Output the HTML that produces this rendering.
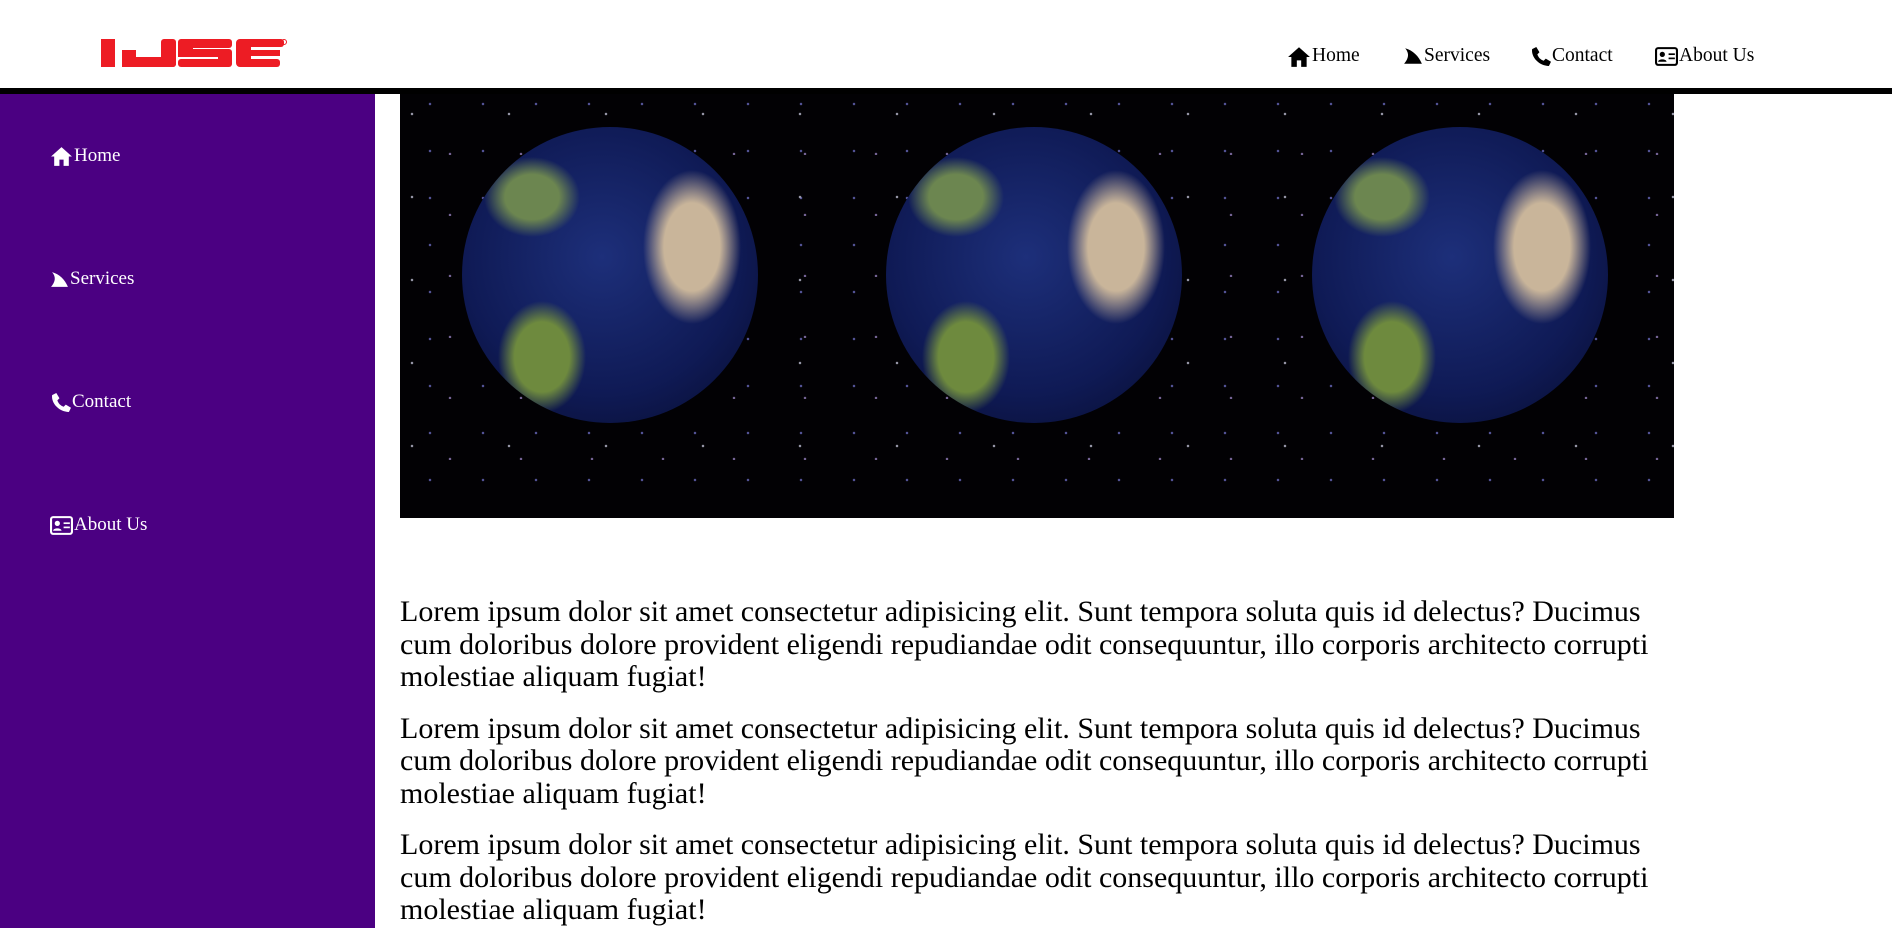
<!DOCTYPE html>
<html><head><meta charset="utf-8"><style>
*{margin:0;padding:0;box-sizing:border-box}
body{width:1892px;height:928px;overflow:hidden;background:#fff;font-family:"Liberation Serif",serif;position:relative}
#hdr{position:absolute;left:0;top:0;width:1892px;height:88px;background:#fff}
#bar{position:absolute;left:0;top:88px;width:1892px;height:6px;background:#000}
.nav{position:absolute;top:44px;font-size:19.5px;color:#000;display:flex;align-items:center;white-space:nowrap;line-height:24px}
.nav svg,.side svg{display:block;margin-right:1px}
#side{position:absolute;left:0;top:94px;width:375px;height:834px;background:#4b0082}
.side{position:absolute;left:50px;font-size:19px;color:#fff;display:flex;align-items:center;line-height:24px}
#img{position:absolute;left:400px;top:94px;width:1274px;height:424px;background:
radial-gradient(circle at 12px 20px,#99a 0 1px,transparent 1.5px) 0 0/97px 83px,
radial-gradient(circle at 50px 60px,#769 0 1px,transparent 1.5px) 0 0/71px 61px,
radial-gradient(circle at 30px 10px,#559 0 1px,transparent 1.5px) 0 0/53px 47px,#020104}
.g{position:absolute;top:33px;width:296px;height:296px;border-radius:50%;background:
radial-gradient(ellipse 70px 110px at 230px 120px,#c9b59a 0 40%,transparent 70%),
radial-gradient(ellipse 55px 70px at 80px 230px,#6e8a3e 0 50%,transparent 80%),
radial-gradient(ellipse 60px 50px at 70px 70px,#6c8650 0 45%,transparent 80%),
radial-gradient(circle at 140px 130px,#1d2f7a 0,#0f1a55 60%,#070b2a 100%)}
#txt{position:absolute;left:400px;top:596px;width:1255px;font-size:30px;line-height:32.5px;color:#000}
#txt p{margin-bottom:19px}
</style></head><body>
<div id="hdr">
<svg style="position:absolute;left:0;top:0" width="300" height="88" fill="#ed1c24">
<rect x="101" y="39" width="14" height="28"/>
<rect x="161" y="39" width="15" height="28" rx="3"/><rect x="122" y="57" width="54" height="10" rx="3"/><rect x="122" y="50" width="14" height="17"/>
<rect x="184" y="39" width="48" height="9" rx="3"/><rect x="178" y="39" width="15" height="18" rx="3"/><rect x="178" y="49" width="50" height="8"/><rect x="218" y="49" width="14" height="18" rx="3"/><rect x="178" y="59" width="52" height="8" rx="3"/>
<rect x="238" y="39" width="46" height="8" rx="3"/><rect x="236" y="39" width="15" height="28" rx="4"/><rect x="248" y="50" width="32" height="6"/><rect x="238" y="59" width="42" height="8" rx="3"/>
<circle cx="284" cy="42" r="2.5" fill="none" stroke="#ed1c24" stroke-width="1"/>
</svg>
</div>
<div id="bar"></div>
<div class="nav" style="left:1287px"><svg width="24" height="21" viewBox="0 0 22 19"><path d="M11 1L1 10h3v9h5v-6h4v6h5v-9h3z"/></svg>Home</div>
<div class="nav" style="left:1403px"><svg width="20" height="18" viewBox="0 0 18 16"><path d="M2 1C9 3 14 8 17 15H1L4 13 1 15C5 10 6 6 2 1z"/></svg>Services</div>
<div class="nav" style="left:1530px"><svg width="21" height="21" viewBox="0 0 20 20"><path d="M2 3l4-2 3 5-2 2c1 3 3 5 6 6l2-2 5 3-2 4C9 19 1 11 2 3z"/></svg>Contact</div>
<div class="nav" style="left:1655px"><svg width="23" height="19" viewBox="0 0 22 18"><rect x="1" y="1" width="20" height="16" rx="2" fill="none" stroke="#000" stroke-width="2"/><circle cx="7" cy="7" r="2.5"/><path d="M3 14c0-3 8-3 8 0z"/><rect x="13" y="6" width="6" height="1.6"/><rect x="13" y="10" width="6" height="1.6"/></svg>About Us</div>
<div id="side">
<div class="side" style="top:50px"><svg width="23" height="20" viewBox="0 0 22 19" fill="#fff"><path d="M11 1L1 10h3v9h5v-6h4v6h5v-9h3z"/></svg>Home</div>
<div class="side" style="top:173px"><svg width="19" height="17" viewBox="0 0 18 16" fill="#fff"><path d="M2 1C9 3 14 8 17 15H1L4 13 1 15C5 10 6 6 2 1z"/></svg>Services</div>
<div class="side" style="top:296px"><svg width="21" height="21" viewBox="0 0 20 20" fill="#fff"><path d="M2 3l4-2 3 5-2 2c1 3 3 5 6 6l2-2 5 3-2 4C9 19 1 11 2 3z"/></svg>Contact</div>
<div class="side" style="top:419px"><svg width="23" height="19" viewBox="0 0 22 18" fill="#fff"><rect x="1" y="1" width="20" height="16" rx="2" fill="none" stroke="#fff" stroke-width="2"/><circle cx="7" cy="7" r="2.5"/><path d="M3 14c0-3 8-3 8 0z"/><rect x="13" y="6" width="6" height="1.6"/><rect x="13" y="10" width="6" height="1.6"/></svg>About Us</div>
</div>
<div id="img">
<div class="g" style="left:62px"></div>
<div class="g" style="left:486px"></div>
<div class="g" style="left:912px"></div>
</div>
<div id="txt">
<p>Lorem ipsum dolor sit amet consectetur adipisicing elit. Sunt tempora soluta quis id delectus? Ducimus cum doloribus dolore provident eligendi repudiandae odit consequuntur, illo corporis architecto corrupti molestiae aliquam fugiat!</p>
<p>Lorem ipsum dolor sit amet consectetur adipisicing elit. Sunt tempora soluta quis id delectus? Ducimus cum doloribus dolore provident eligendi repudiandae odit consequuntur, illo corporis architecto corrupti molestiae aliquam fugiat!</p>
<p>Lorem ipsum dolor sit amet consectetur adipisicing elit. Sunt tempora soluta quis id delectus? Ducimus cum doloribus dolore provident eligendi repudiandae odit consequuntur, illo corporis architecto corrupti molestiae aliquam fugiat!</p>
</div>
</body></html>
